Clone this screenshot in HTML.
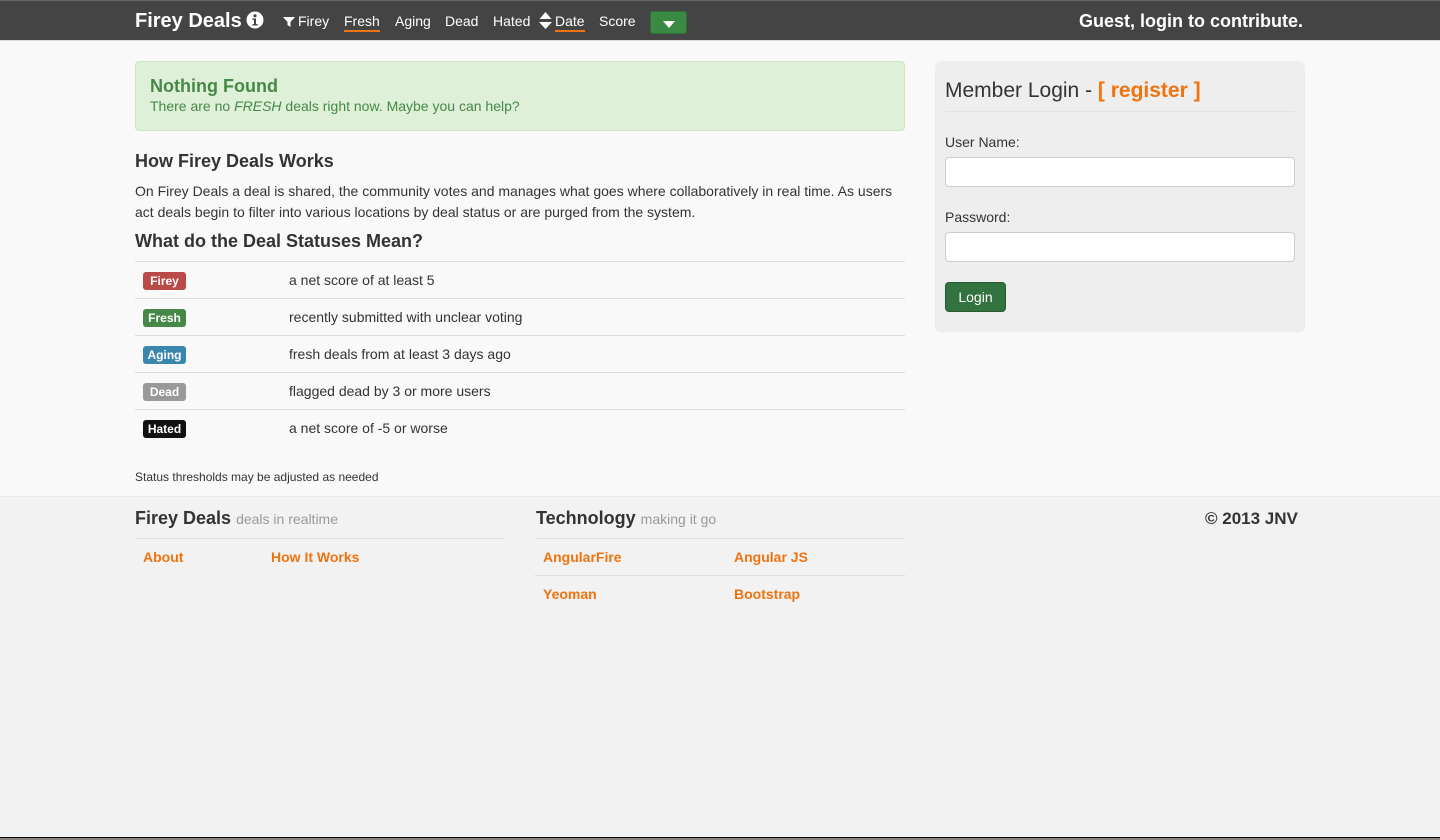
<!DOCTYPE html>
<html><head><meta charset="utf-8"><style>
*{box-sizing:border-box;margin:0;padding:0}
body{width:1440px;height:840px;overflow:hidden;font-family:"Liberation Sans",Arial,sans-serif;background:#f2f2f2;color:#333;font-size:14px;position:relative}
.a{position:absolute;white-space:nowrap}
.nav{position:absolute;left:0;top:0;width:1440px;height:41px;background:#444;border-top:1px solid #666;border-bottom:1px solid #ddd}
.nav .a{color:#fff;font-size:14px;top:12px}
.main{position:absolute;left:0;top:41px;width:1440px;height:456px;background:#f9f9f9;border-bottom:1px solid #eaeaea}
.alert{position:absolute;left:135px;top:61px;width:770px;height:70px;background:#dff0d8;border:1px solid #d0e6be;border-radius:4px}
h3{font-size:18px;font-weight:bold;color:#333}
.row{position:absolute;left:135px;width:770px;height:37px;border-top:1px solid #ddd}
.badge{position:absolute;left:8px;top:10px;height:18px;width:43px;border-radius:3px;color:#fff;font-size:12px;font-weight:bold;text-align:center;line-height:18px}
.row .t{position:absolute;left:154px;top:10px;font-size:14px}
.or{color:#f0730e;font-weight:bold}
.in{position:absolute;left:945px;width:350px;height:30px;background:#fff;border:1px solid #ccc;border-radius:4px}
.fl{position:absolute;border-top:1px solid #ddd}
</style></head><body>
<div class="nav">
<div class="a" style="left:135px;top:9px;font-size:20px;font-weight:bold">Firey Deals</div>
<svg class="a" style="left:246px;top:10px" width="18" height="18" viewBox="0 0 18 18"><circle cx="9" cy="9" r="8.5" fill="#fff"/><circle cx="9" cy="4.8" r="1.6" fill="#444"/><path d="M6.5 7.5h3.5v5.5h1.5v1.5h-5v-1.5h1.5v-4h-1.5z" fill="#444"/></svg>
<svg class="a" style="left:283px;top:15px" width="12" height="12" viewBox="0 0 12 12"><path d="M0 1h12l-4.5 5v5l-3-2v-3z" fill="#fff"/></svg>
<div class="a" style="left:298px">Firey</div>
<div class="a" style="left:344px;border-bottom:2px solid #f0730e;padding-bottom:1px">Fresh</div>
<div class="a" style="left:395px">Aging</div>
<div class="a" style="left:445px">Dead</div>
<div class="a" style="left:493px">Hated</div>
<svg class="a" style="left:539px;top:11px" width="13" height="18" viewBox="0 0 13 18"><path d="M6.5 0l6 7h-12zM0 10h13l-6.5 7z" fill="#fff"/></svg>
<div class="a" style="left:555px;border-bottom:2px solid #f0730e;padding-bottom:1px">Date</div>
<div class="a" style="left:599px">Score</div>
<div class="a" style="left:650px;top:10px;width:37px;height:23px;background:#3a8a44;border:1px solid #2f7038;border-radius:3px"><svg style="position:absolute;left:12px;top:9px" width="12" height="7"><path d="M0 0h12l-6 7z" fill="#fff"/></svg></div>
<div class="a" style="left:1079px;top:10px;font-size:18px;font-weight:bold">Guest, login to contribute.</div>
</div>
<div class="main"></div>
<div class="alert"><div class="a" style="left:14px;top:14px;font-size:18px;font-weight:bold;color:#468847">Nothing Found</div><div class="a" style="left:14px;top:36px;color:#468847">There are no <i>FRESH</i> deals right now. Maybe you can help?</div></div>
<h3 class="a" style="left:135px;top:151px">How Firey Deals Works</h3>
<div class="a" style="left:135px;top:181px;line-height:21px;white-space:normal;width:765px">On Firey Deals a deal is shared, the community votes and manages what goes where collaboratively in real time. As users act deals begin to filter into various locations by deal status or are purged from the system.</div>
<h3 class="a" style="left:135px;top:231px">What do the Deal Statuses Mean?</h3>
<div class="row" style="top:261px"><div class="badge" style="background:#b94a48">Firey</div><div class="t">a net score of at least 5</div></div>
<div class="row" style="top:298px"><div class="badge" style="background:#468847">Fresh</div><div class="t">recently submitted with unclear voting</div></div>
<div class="row" style="top:335px"><div class="badge" style="background:#3a87ad">Aging</div><div class="t">fresh deals from at least 3 days ago</div></div>
<div class="row" style="top:372px"><div class="badge" style="background:#999">Dead</div><div class="t">flagged dead by 3 or more users</div></div>
<div class="row" style="top:409px"><div class="badge" style="background:#111">Hated</div><div class="t">a net score of -5 or worse</div></div>
<div class="a" style="left:135px;top:470px;font-size:12px">Status thresholds may be adjusted as needed</div>
<div class="a" style="left:935px;top:61px;width:370px;height:271px;background:#eee;border-radius:6px"></div>
<div class="a" style="left:945px;top:79px;font-size:21px">Member Login - <span class="or">[ register ]</span></div>
<div class="fl" style="left:945px;top:111px;width:350px;border-color:#e2e2e2"></div>
<div class="a" style="left:945px;top:134px">User Name:</div>
<div class="in" style="top:157px"></div>
<div class="a" style="left:945px;top:209px">Password:</div>
<div class="in" style="top:232px"></div>
<div class="a" style="left:945px;top:282px;width:61px;height:30px;background:#33733f;border:1px solid #275a31;border-radius:4px;color:#fff;text-align:center;line-height:28px">Login</div>
<div class="a" style="left:135px;top:508px;font-size:18px;font-weight:bold">Firey Deals <span style="font-size:14px;font-weight:normal;color:#999">deals in realtime</span></div>
<div class="fl" style="left:135px;top:538px;width:370px"></div>
<div class="a or" style="left:143px;top:549px">About</div>
<div class="a or" style="left:271px;top:549px">How It Works</div>
<div class="a" style="left:536px;top:508px;font-size:18px;font-weight:bold">Technology <span style="font-size:14px;font-weight:normal;color:#999">making it go</span></div>
<div class="fl" style="left:535px;top:538px;width:370px"></div>
<div class="fl" style="left:535px;top:575px;width:370px"></div>
<div class="a or" style="left:543px;top:549px">AngularFire</div>
<div class="a or" style="left:734px;top:549px">Angular JS</div>
<div class="a or" style="left:543px;top:586px">Yeoman</div>
<div class="a or" style="left:734px;top:586px">Bootstrap</div>
<div class="a" style="left:1205px;top:509px;font-size:17px;font-weight:bold">© 2013 JNV</div>
<div class="a" style="left:0;top:837px;width:1440px;height:3px;background:#8a8580;border-top:1px solid #000"></div>
</body></html>
